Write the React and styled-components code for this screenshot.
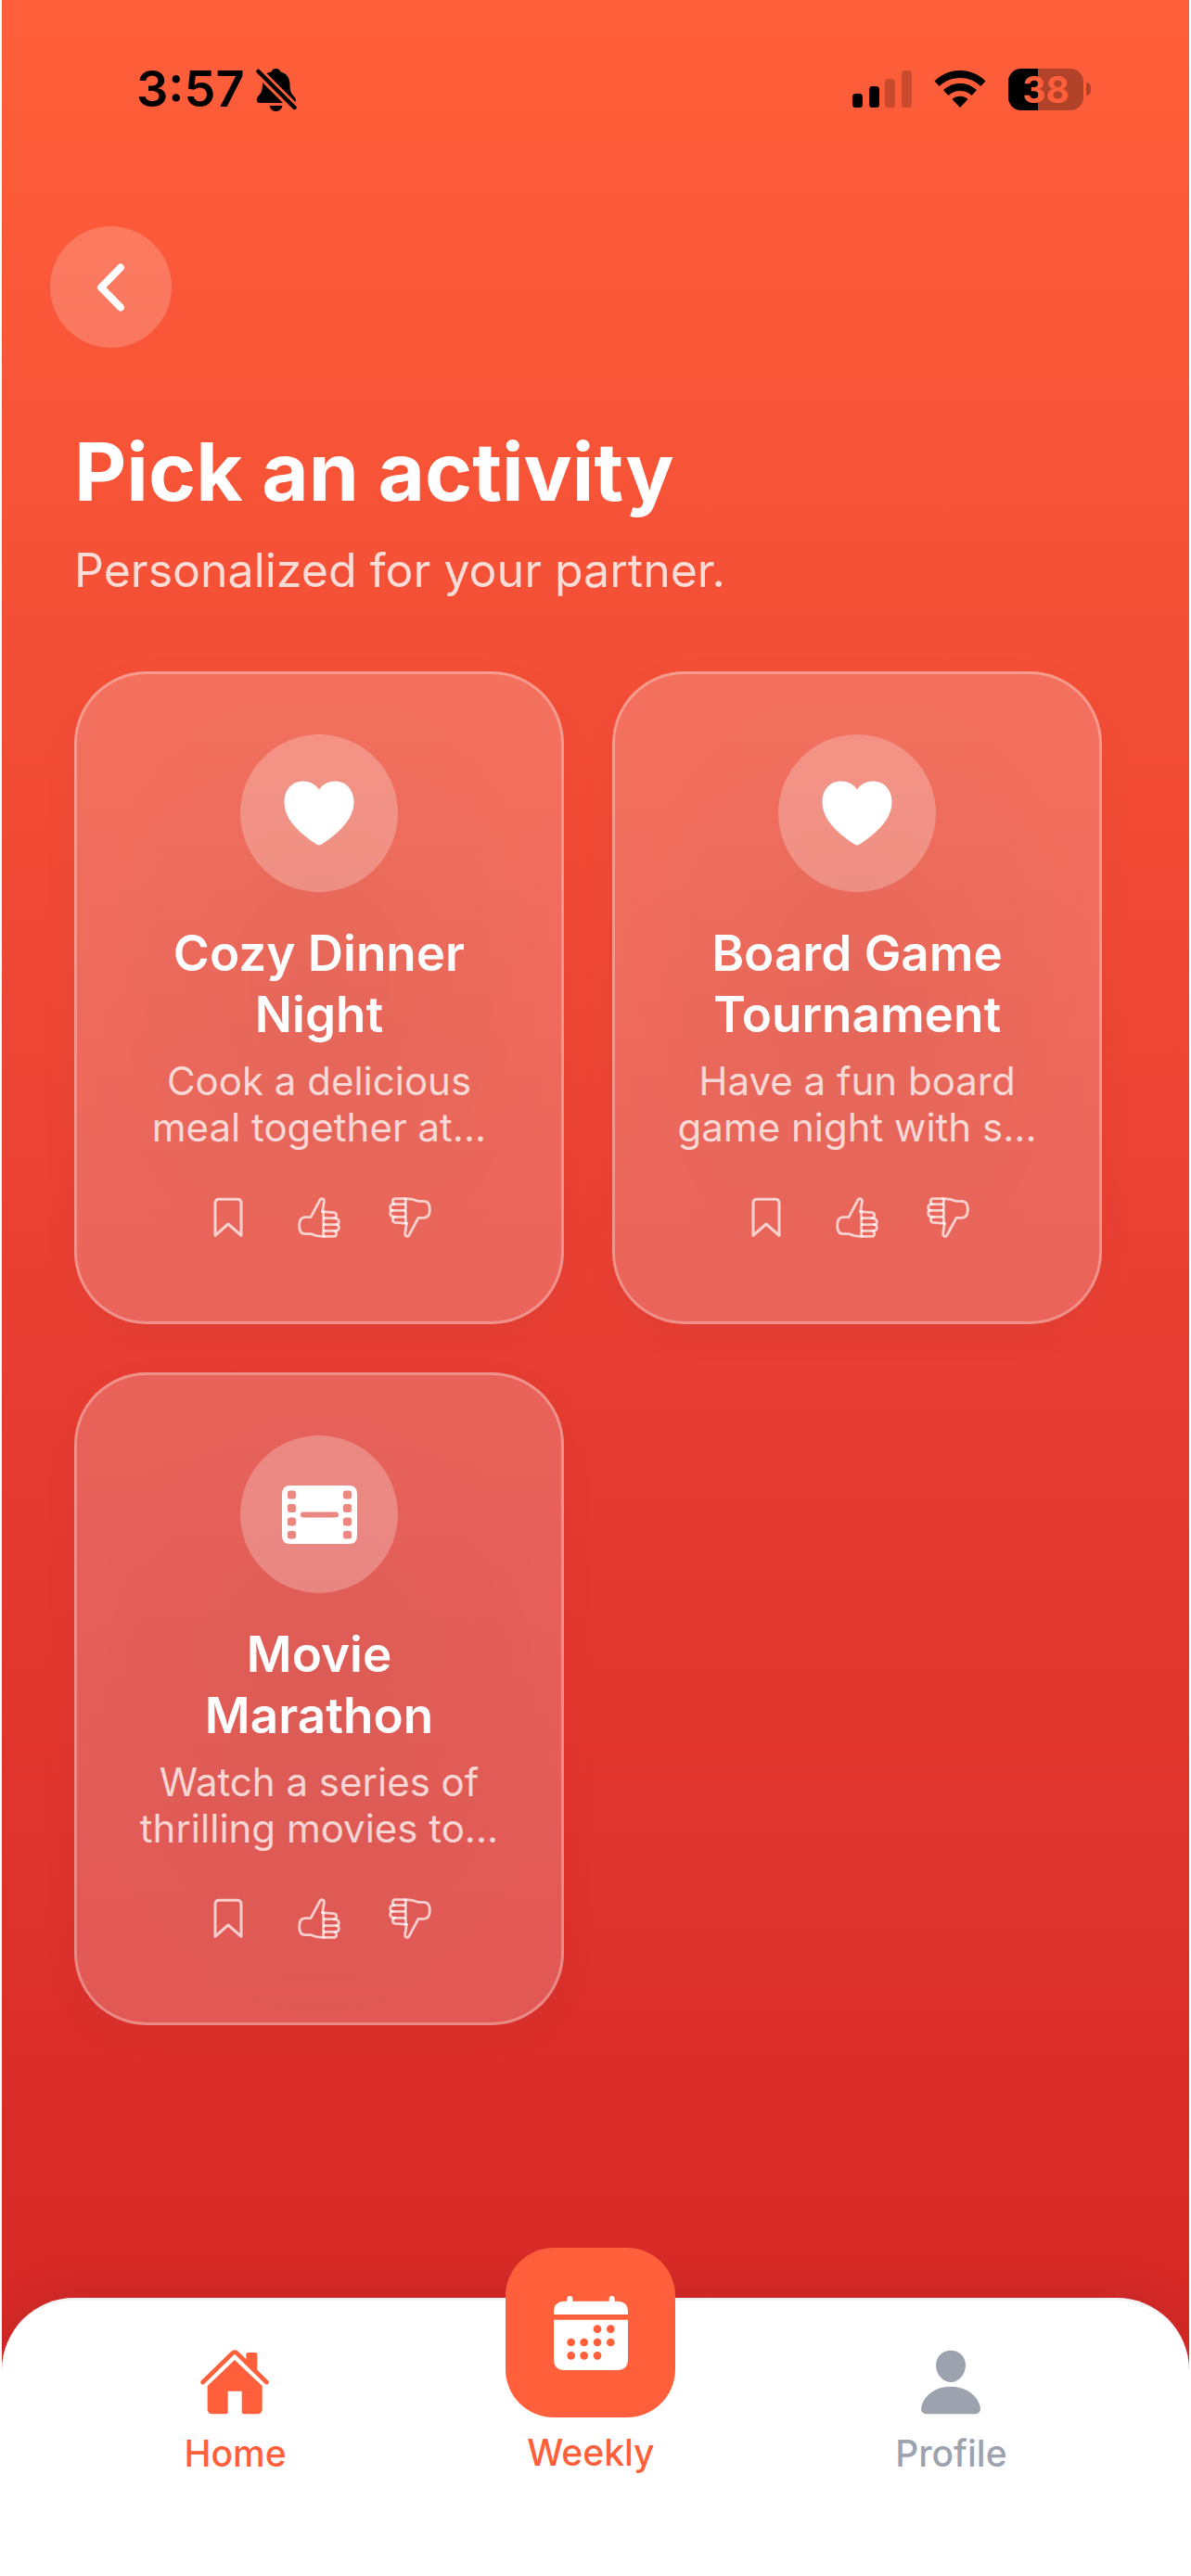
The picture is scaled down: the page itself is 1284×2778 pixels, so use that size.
import React, { useState } from "react";
import styled, { createGlobalStyle } from "styled-components";

const GlobalStyle = createGlobalStyle`
  * {
    box-sizing: border-box;
  }

  body {
    margin: 0;
    background: #ffffff;
    font-family: Inter, "Liberation Sans", sans-serif;
  }

  button {
    border: 0;
    padding: 0;
    background: none;
    color: inherit;
    font: inherit;
    cursor: pointer;
  }

  svg {
    display: block;
  }
`;

const Page = styled.div`
  display: flex;
  flex-direction: column;
  min-height: 100vh;
  margin: 0 2px;
  overflow: hidden;
  background: linear-gradient(180deg, #ff5f3a 0%, #e63c32 55%, #d32424 100%);
`;

const StatusBar = styled.div`
  display: flex;
  align-items: center;
  justify-content: space-between;
  height: 128px;
  padding: 64px 106px 0 145px;
  color: #000000;
`;

const StatusGroup = styled.div`
  display: flex;
  align-items: center;
  gap: ${(props) => props.$gap}px;
`;

const Time = styled.span`
  font-size: 54px;
  font-weight: 600;
  line-height: 66px;
`;

const Battery = styled.div`
  display: flex;
  align-items: center;
  gap: 3px;
`;

const BatteryBody = styled.div`
  width: 81px;
  height: 45px;
  border-radius: 14px;
  background: linear-gradient(90deg, #000000 39%, #b2422a 39%);
  color: #ff5f3a;
  font-size: 39px;
  font-weight: 700;
  line-height: 45px;
  text-align: center;
`;

const BatteryCap = styled.div`
  width: 5px;
  height: 14px;
  border-radius: 0 5px 5px 0;
  background: #b2422a;
`;

const BackButton = styled.button`
  display: flex;
  align-items: center;
  justify-content: center;
  width: 131px;
  height: 131px;
  margin: 116px 0 0 52px;
  border-radius: 50%;
  background: rgba(255, 255, 255, 0.2);
`;

const Main = styled.main`
  padding: 80px 94px 80px 78px;
`;

const Title = styled.h1`
  margin: 0;
  color: #ffffff;
  font-size: 87px;
  font-weight: 700;
  line-height: 108px;
`;

const Subtitle = styled.p`
  margin: 20px 0 77px;
  color: rgba(255, 255, 255, 0.8);
  font-size: 50px;
  line-height: 64px;
`;

const Grid = styled.div`
  display: grid;
  grid-template-columns: repeat(2, minmax(0, 1fr));
  gap: 52px;
`;

const Card = styled.article`
  display: flex;
  flex-direction: column;
  align-items: center;
  padding: 65px 56px 90px;
  border: 3px solid rgba(255, 255, 255, 0.3);
  border-radius: 78px;
  background:
    linear-gradient(rgba(255, 255, 255, 0.2), rgba(255, 255, 255, 0.2)) border-box,
    radial-gradient(closest-side, rgba(0, 0, 0, 0.06), rgba(0, 0, 0, 0.01)) border-box;
  box-shadow: 0 12px 48px rgba(0, 0, 0, 0.03);
  text-align: center;
`;

const IconCircle = styled.div`
  display: flex;
  align-items: center;
  justify-content: center;
  width: 170px;
  height: 170px;
  border-radius: 50%;
  background: rgba(255, 255, 255, 0.25);
`;

const CardTitle = styled.h2`
  margin: 33px 0 14px;
  color: #ffffff;
  font-size: 53px;
  font-weight: 600;
  line-height: 66px;
`;

const CardText = styled.p`
  margin: 0 0 50px;
  color: rgba(255, 255, 255, 0.75);
  font-size: 42px;
  line-height: 50px;
`;

const Actions = styled.div`
  display: flex;
  gap: 52px;
  color: rgba(255, 255, 255, 0.7);
`;

const ActionButton = styled.button`
  display: flex;
  justify-content: center;
  width: 46px;
`;

const NavBar = styled.nav`
  display: flex;
  justify-content: space-around;
  height: 300px;
  margin-top: auto;
  padding: 0 78px;
  border-top: 3px solid #f3f4f6;
  border-radius: 78px 78px 0 0;
  background: #ffffff;
  box-shadow: 0 -12px 48px rgba(0, 0, 0, 0.08);
`;

const NavItem = styled.button`
  display: flex;
  flex-direction: column;
  align-items: center;
  align-self: flex-start;
  gap: 18px;
  margin-top: 53px;
  color: ${(props) => (props.$active ? "#ff5f3a" : "#9ca3af")};
  font-size: 39px;
  font-weight: 500;
  line-height: 48px;
`;

const WeeklyItem = styled(NavItem)`
  gap: 14px;
  margin-top: -57px;
`;

const WeeklyTile = styled.span`
  display: flex;
  align-items: center;
  justify-content: center;
  width: 183px;
  height: 183px;
  border-radius: 52px;
  background: #ff5f3a;
`;

const BellOffIcon = () => (
  <svg width="44" height="47" viewBox="0 0 44 47">
    <path
      d="M11.500 6C13 5.500 15 5 16.500 4.500C17.500 2 19 1 21.500 1S25.500 2 26.500 4.500C33 6 36.500 11 36.500 18C36.500 26 38 28 41 31C43 33.500 43 34.500 42.500 37Z"
      fill="currentColor"
    />
    <path
      d="M7 16L29 38H4C0 38 0 33 2.500 30.500C6 27 7 25 7 16Z"
      fill="currentColor"
    />
    <path d="M14.500 41H28.500C27.500 45 25 47 21.500 47S15.500 45 14.500 41Z" fill="currentColor" />
    <path d="M2.500 4L41.500 43" stroke="currentColor" strokeWidth="4.500" strokeLinecap="round" />
  </svg>
);

const SignalIcon = () => (
  <svg width="64" height="40" viewBox="0 0 64 40" fill="currentColor">
    <rect x="0" y="25" width="11" height="15" rx="3.500" />
    <rect x="18" y="17" width="11" height="23" rx="3.500" />
    <rect x="35" y="9" width="11" height="31" rx="3.500" opacity="0.2" />
    <rect x="53" y="0" width="11" height="40" rx="3.500" opacity="0.2" />
  </svg>
);

const WifiIcon = () => (
  <svg width="56" height="40" viewBox="0 0 56 40" fill="currentColor">
    <path d="M0.500 11.500C8 4 17.500 0 28 0S48 4 55.500 11.500L50.300 17C44.300 11 36.500 8 28 8S11.700 11 5.700 17Z" />
    <path d="M10 21.300C15 16.500 21 14 28 14S41 16.500 46 21.300L40.500 27C37 23.800 33 22 28 22S19 23.800 15.500 27Z" />
    <path d="M19.500 31C22 28.900 24.700 27.800 28 27.800S34 28.900 36.500 31L28 40Z" />
  </svg>
);

const ChevronIcon = () => (
  <svg width="32" height="52" viewBox="0 0 32 52">
    <path
      d="M26 4.500L5 26L26 47.500"
      fill="none"
      stroke="#ffffff"
      strokeWidth="8"
      strokeLinecap="round"
      strokeLinejoin="round"
    />
  </svg>
);

const HeartIcon = () => (
  <svg width="76" height="70" viewBox="0 0 76 70">
    <path
      d="M38 69.500C37 69.500 35.500 68.600 34.500 68C14 54.500 0.500 40 0.500 23C0.500 9.500 9 0.500 20.500 0.500C28 0.500 34 3.500 38 9.500C42 3.500 48 0.500 55.500 0.500C67 0.500 75.500 9.500 75.500 23C75.500 40 62 54.500 41.500 68C40.500 68.600 39 69.500 38 69.500Z"
      fill="#ffffff"
    />
  </svg>
);

const FilmIcon = () => (
  <svg width="81" height="63" viewBox="0 0 81 63">
    <path
      fill="#ffffff"
      fillRule="evenodd"
      d="M9 0H72Q81 0 81 9V54Q81 63 72 63H9Q0 63 0 54V9Q0 0 9 0Z
        M8.500 5.500h4q2.500 0 2.500 2.500v4q0 2.500-2.500 2.500h-4q-2.500 0-2.500-2.500v-4q0-2.500 2.500-2.500Z
        M8.500 20h4q2.500 0 2.500 2.500v4q0 2.500-2.500 2.500h-4q-2.500 0-2.500-2.500v-4q0-2.500 2.500-2.500Z
        M8.500 34.500h4q2.500 0 2.500 2.500v4q0 2.500-2.500 2.500h-4q-2.500 0-2.500-2.500v-4q0-2.500 2.500-2.500Z
        M8.500 49h4q2.500 0 2.500 2.500v3.500q0 2.500-2.500 2.500h-4q-2.500 0-2.500-2.500v-3.500q0-2.500 2.500-2.500Z
        M68.500 5.500h4q2.500 0 2.500 2.500v4q0 2.500-2.500 2.500h-4q-2.500 0-2.500-2.500v-4q0-2.500 2.500-2.500Z
        M68.500 20h4q2.500 0 2.500 2.500v4q0 2.500-2.500 2.500h-4q-2.500 0-2.500-2.500v-4q0-2.500 2.500-2.500Z
        M68.500 34.500h4q2.500 0 2.500 2.500v4q0 2.500-2.500 2.500h-4q-2.500 0-2.500-2.500v-4q0-2.500 2.500-2.500Z
        M68.500 49h4q2.500 0 2.500 2.500v3.500q0 2.500-2.500 2.500h-4q-2.500 0-2.500-2.500v-3.500q0-2.500 2.500-2.500Z
        M23 28.500H58a3 3 0 0 1 0 6H23a3 3 0 0 1 0-6Z"
    />
  </svg>
);

const BookmarkIcon = () => (
  <svg width="32" height="44" viewBox="0 0 96 132">
    <path
      d="M6 124V20Q6 7 19 7H77Q90 7 90 20V124L48 87Z"
      fill="none"
      stroke="currentColor"
      strokeWidth="9"
      strokeLinejoin="round"
    />
  </svg>
);

const ThumbIcon = ({ down }) => (
  <svg width="46" height="44" viewBox="0 0 138 132">
    <g
      transform={down ? "rotate(180 69 66)" : undefined}
      fill="none"
      stroke="currentColor"
      strokeWidth="8.500"
      strokeLinecap="round"
      strokeLinejoin="round"
    >
      <path d="M80 47L85 15C87 5 76 2 72 9L42 65H24C12 65 5 75 5 92C5 110 12 119 24 119H44C56 125 64 127 80 127H117Q125 127 125 118Q125 109 117 109H84" />
      <path d="M80 47L117 50Q125 51 125 59Q125 68 117 68H84" />
      <path d="M117 68Q133 70 133 79Q133 89 125 89H84" />
      <path d="M125 89Q133 90 133 99Q133 109 119 109" />
      <path d="M84 48Q80 59 85 68Q80 79 85 89Q80 100 85 109Q80 118 85 127" />
    </g>
  </svg>
);

const HomeIcon = () => (
  <svg width="74" height="70" viewBox="0 0 222 210" fill="currentColor">
    <path
      d="M8 105L104 11Q111 4 118 11L214 105"
      fill="none"
      stroke="currentColor"
      strokeWidth="14"
      strokeLinecap="round"
      strokeLinejoin="round"
    />
    <path d="M148 34V16Q148 9 155 9H177Q184 9 184 16V72L148 36Z" />
    <path d="M111 33L200 117V192Q200 208 184 208H141Q134 208 134 201V134H89V201Q89 208 82 208H39Q23 208 23 192V117Z" />
  </svg>
);

const CalendarIcon = () => (
  <svg width="80" height="80" viewBox="0 0 240 240">
    <g fill="#ffffff">
      <rect x="43" y="0" width="18" height="36" rx="9" />
      <rect x="179" y="0" width="18" height="36" rx="9" />
      <path d="M0 60V52Q0 17 35 17H205Q240 17 240 52V60Z" />
      <path d="M0 77H240V205Q240 240 205 240H35Q0 240 0 205Z" />
    </g>
    <g fill="#ff5f3a">
      <circle cx="141" cy="107" r="13" />
      <circle cx="184" cy="107" r="13" />
      <circle cx="56" cy="150" r="13" />
      <circle cx="98" cy="150" r="13" />
      <circle cx="141" cy="150" r="13" />
      <circle cx="184" cy="150" r="13" />
      <circle cx="56" cy="193" r="13" />
      <circle cx="98" cy="193" r="13" />
      <circle cx="141" cy="193" r="13" />
    </g>
  </svg>
);

const ProfileIcon = () => (
  <svg width="64" height="70" viewBox="0 0 192 210" fill="currentColor">
    <path d="M96 2C123 2 144 23 144 50C144 78 122 105 96 105S48 78 48 50C48 23 69 2 96 2Z" />
    <path d="M96 119C150 119 188 154 192 190Q192 207 176 208H16Q0 207 0 190C4 154 42 119 96 119Z" />
  </svg>
);

const activities = [
  {
    title: "Cozy Dinner Night",
    text: "Cook a delicious meal together at...",
    Icon: HeartIcon,
  },
  {
    title: "Board Game Tournament",
    text: "Have a fun board game night with s...",
    Icon: HeartIcon,
  },
  {
    title: "Movie Marathon",
    text: "Watch a series of thrilling movies to...",
    Icon: FilmIcon,
  },
];

const Activity = ({ title, text, Icon }) => {
  const [saved, setSaved] = useState(false);

  return (
    <Card>
      <IconCircle>
        <Icon />
      </IconCircle>
      <CardTitle>{title}</CardTitle>
      <CardText>{text}</CardText>
      <Actions>
        <ActionButton
          aria-label="Save"
          aria-pressed={saved}
          onClick={() => setSaved(!saved)}
        >
          <BookmarkIcon />
        </ActionButton>
        <ActionButton aria-label="Like">
          <ThumbIcon />
        </ActionButton>
        <ActionButton aria-label="Dislike">
          <ThumbIcon down />
        </ActionButton>
      </Actions>
    </Card>
  );
};

const App = () => (
  <>
    <GlobalStyle />
    <Page>
      <StatusBar>
        <StatusGroup $gap={12}>
          <Time>3:57</Time>
          <BellOffIcon />
        </StatusGroup>
        <StatusGroup $gap={24}>
          <SignalIcon />
          <WifiIcon />
          <Battery>
            <BatteryBody>38</BatteryBody>
            <BatteryCap />
          </Battery>
        </StatusGroup>
      </StatusBar>

      <BackButton aria-label="Back">
        <ChevronIcon />
      </BackButton>

      <Main>
        <Title>Pick an activity</Title>
        <Subtitle>Personalized for your partner.</Subtitle>
        <Grid>
          {activities.map((activity) => (
            <Activity key={activity.title} {...activity} />
          ))}
        </Grid>
      </Main>

      <NavBar>
        <NavItem $active>
          <HomeIcon />
          Home
        </NavItem>
        <WeeklyItem $active>
          <WeeklyTile>
            <CalendarIcon />
          </WeeklyTile>
          Weekly
        </WeeklyItem>
        <NavItem>
          <ProfileIcon />
          Profile
        </NavItem>
      </NavBar>
    </Page>
  </>
);

export default App;
